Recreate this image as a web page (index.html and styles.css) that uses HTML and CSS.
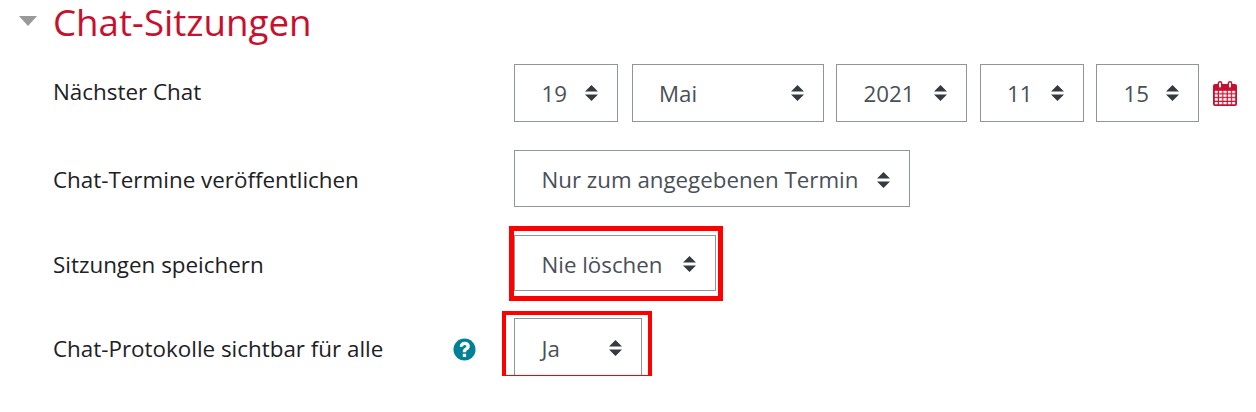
FILE: index.html
```html
<!DOCTYPE html>
<html lang="en">
<head>
    <meta charset="UTF-8">
    <title>Chat-Sitzungen</title>
    <link rel="stylesheet" href="styles.css">
</head>
<body>
    <div class="section">
        <div class="section-head">
            <span class="caret"></span>
            <h3>Chat-Sitzungen</h3>
        </div>

        <div class="row row-date">
            <div class="label">Nächster Chat</div>
            <div class="controls">
                <div class="select s-day s-first"><span>19</span><svg class="arrows" viewBox="0 0 13 16"><path d="M6.5 0L13 6.5H0zM6.5 16L0 9.5H13z"/></svg></div>
                <div class="select s-month"><span>Mai</span><svg class="arrows" viewBox="0 0 13 16"><path d="M6.5 0L13 6.5H0zM6.5 16L0 9.5H13z"/></svg></div>
                <div class="select s-year"><span>2021</span><svg class="arrows" viewBox="0 0 13 16"><path d="M6.5 0L13 6.5H0zM6.5 16L0 9.5H13z"/></svg></div>
                <div class="select s-day"><span>11</span><svg class="arrows" viewBox="0 0 13 16"><path d="M6.5 0L13 6.5H0zM6.5 16L0 9.5H13z"/></svg></div>
                <div class="select s-day s-last"><span>15</span><svg class="arrows" viewBox="0 0 13 16"><path d="M6.5 0L13 6.5H0zM6.5 16L0 9.5H13z"/></svg></div>
                <svg class="calendar" viewBox="0 0 24 25">
                    <defs>
                        <pattern id="cells" x="1.6" y="9.6" width="4.4" height="3.8" patternUnits="userSpaceOnUse">
                            <rect width="3.2" height="2.6" fill="#fff"/>
                        </pattern>
                    </defs>
                    <rect y="3" width="24" height="22" rx="2"/>
                    <rect x="1.6" y="9.6" width="20.800" height="13.800" fill="url(#cells)"/>
                    <rect class="ring" x="5.300" y="0.700" width="3.400" height="6.500" rx="1.700"/>
                    <rect class="ring" x="15.300" y="0.700" width="3.400" height="6.500" rx="1.700"/>
                </svg>
            </div>
        </div>

        <div class="row row-publish">
            <div class="label">Chat-Termine veröffentlichen</div>
            <div class="select s-publish"><span>Nur zum angegebenen Termin</span><svg class="arrows" viewBox="0 0 13 16"><path d="M6.5 0L13 6.5H0zM6.5 16L0 9.5H13z"/></svg></div>
        </div>

        <div class="row row-keep">
            <div class="label">Sitzungen speichern</div>
            <div class="select s-keep">
                <span>Nie löschen</span><svg class="arrows" viewBox="0 0 13 16"><path d="M6.5 0L13 6.5H0zM6.5 16L0 9.5H13z"/></svg>
                <div class="mark mark-keep"></div>
            </div>
        </div>

        <div class="row row-logs">
            <div class="label">
                Chat-Protokolle sichtbar für alle
                <svg class="help" viewBox="0 0 24 24">
                    <circle cx="12" cy="12" r="11.500"/>
                    <path class="help-q" transform="translate(12 12) scale(1.2) translate(-12 -11.700)" d="M7.800 9.200C8 6.700 9.800 5 12.300 5c2.500 0 4.300 1.600 4.300 3.800 0 1.700-.9 2.600-2.100 3.400-.9.600-1.100 1-1.100 1.900h-2.900c0-1.800.5-2.700 1.800-3.600.9-.6 1.300-1 1.300-1.600 0-.7-.6-1.200-1.400-1.200-.9 0-1.500.6-1.700 1.600zM10.500 15.400h2.900v2.900h-2.900z"/>
                </svg>
            </div>
            <div class="select s-logs">
                <span>Ja</span><svg class="arrows" viewBox="0 0 13 16"><path d="M6.5 0L13 6.5H0zM6.5 16L0 9.5H13z"/></svg>
                <div class="mark mark-logs"></div>
            </div>
        </div>
    </div>
</body>
</html>
```

FILE: styles.css
```css
/* Moodle style form section */
body {
    margin: 0;
    background-color: #fff;
    color: #1d2125;
    font-family: "Open Sans", "Noto Sans", sans-serif;
    font-size: 22px;
}

.section {
    padding-left: 19px;
}

.section-head {
    display: flex;
    align-items: center;
    height: 44px;
}

.caret {
    width: 0;
    height: 0;
    border-left: 9px solid transparent;
    border-right: 9px solid transparent;
    border-top: 10px solid #999;
    margin-right: 16px;
    margin-top: -2px;
}

h3 {
    margin: 0;
    color: #c8102e;
    font-size: 36.7px;
    line-height: 44px;
    font-weight: 400;
}

.row {
    display: flex;
    margin-left: 34px;
}

.row-date {
    margin-top: 20px;
}

.row-publish {
    margin-top: 28px;
}

.row-keep {
    margin-top: 28px;
}

.row-logs {
    margin-top: 27px;
}

.label {
    width: 461px;
    flex-shrink: 0;
    display: flex;
    justify-content: space-between;
    align-items: flex-start;
    padding-right: 38px;
    box-sizing: border-box;
    padding-top: 14px;
    font-size: 22.4px;
}

.row-date .label {
    padding-top: 12px;
}

.row-logs .label {
    padding-top: 15px;
}

.controls {
    display: flex;
    align-items: center;
    gap: 12.5px;
}

.select {
    position: relative;
    display: flex;
    align-items: center;
    justify-content: space-between;
    height: 58px;
    box-sizing: border-box;
    padding: 0 19px 0 26.5px;
    border: 1px solid #8f959e;
    color: #495057;
    font-size: 22.3px;
    background: #fff;
}

.arrows {
    width: 13px;
    height: 16px;
    fill: #343a40;
    flex-shrink: 0;
}

.s-day {
    width: 104px;
}

.s-first {
    margin-right: 1px;
}

.s-last {
    width: 103px;
    margin-right: 1px;
}

.s-month {
    width: 192px;
}

.s-year {
    width: 131px;
}

.s-publish {
    width: 396px;
    height: 57px;
    padding-top: 2px;
}

.s-keep {
    width: 202px;
    height: 56px;
    padding-top: 2px;
}

.s-logs {
    width: 128px;
    padding-top: 2px;
}

.calendar {
    width: 24px;
    height: 25px;
    fill: #c8102e;
    flex-shrink: 0;
}

.calendar .ring {
    fill: #fff;
    stroke: #c8102e;
    stroke-width: 1.4;
}

.help {
    width: 23px;
    height: 23px;
    margin-top: 5px;
}

.help circle {
    fill: #008196;
}

.help-q {
    fill: #fff;
}

/* red boxes drawn over the screenshot */
.mark {
    position: absolute;
    border: 5px solid #f00;
    box-sizing: border-box;
}

.mark-keep {
    left: -6px;
    top: -10px;
    width: 214px;
    height: 75px;
}

.mark-logs {
    left: -13px;
    top: -8px;
    width: 150px;
    height: 68px;
    border-width: 4px;
}
```
